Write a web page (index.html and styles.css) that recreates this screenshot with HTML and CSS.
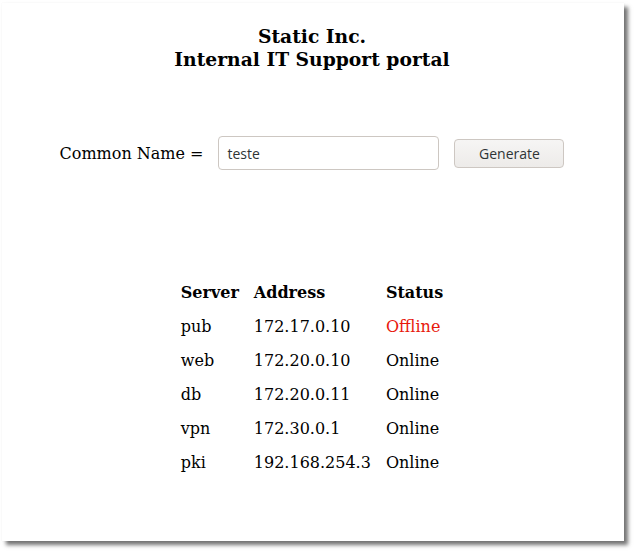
FILE: index.html
```html
<!DOCTYPE html>
<html>
<head>
<meta charset="utf-8">
<link rel="stylesheet" href="styles.css">
</head>
<body>
<div class="window">
  <h1 class="title">Static Inc.<br>Internal IT Support portal</h1>
  <form class="form">
    <label class="label" for="cn">Common Name =</label>
    <input class="input" id="cn" type="text" value="teste">
    <button class="button" type="button">Generate</button>
  </form>
  <table class="servers">
    <thead>
      <tr><th>Server</th><th>Address</th><th>Status</th></tr>
    </thead>
    <tbody>
      <tr><td>pub</td><td>172.17.0.10</td><td class="offline">Offline</td></tr>
      <tr><td>web</td><td>172.20.0.10</td><td>Online</td></tr>
      <tr><td>db</td><td>172.20.0.11</td><td>Online</td></tr>
      <tr><td>vpn</td><td>172.30.0.1</td><td>Online</td></tr>
      <tr><td>pki</td><td>192.168.254.3</td><td>Online</td></tr>
    </tbody>
  </table>
</div>
</body>
</html>
```
FILE: styles.css
```css
html, body {
  margin: 0;
  padding: 0;
  background: #ffffff;
}
body {
  font-family: "DejaVu Serif", serif;
  font-size: 16px;
  color: #000;
  padding: 3px 0 11px 2px;
}
.window {
  box-sizing: border-box;
  width: 622px;
  height: 538px;
  padding-right: 2px;
  background: #fff;
  box-shadow: 4px 4px 4px rgba(0, 0, 0, 0.55), 0 0 1px rgba(0, 0, 0, 0.08);
  overflow: hidden;
  display: flex;
  flex-direction: column;
  align-items: center;
}
.title {
  margin: 22px 0 0;
  font-size: 18.72px;
  line-height: 23px;
  font-weight: bold;
  text-align: center;
}
.form {
  margin-top: 65px;
  display: flex;
  align-items: center;
}
.label {
  margin-right: 15px;
}
.input {
  box-sizing: border-box;
  width: 221px;
  height: 34px;
  border: 1px solid #cdc7c2;
  border-radius: 4px;
  padding: 0 8px;
  font-family: "Open Sans", sans-serif;
  font-size: 14px;
  color: #2e3436;
  margin-right: 15px;
}
.button {
  box-sizing: border-box;
  width: 110px;
  height: 29px;
  border: 1px solid #cdc7c2;
  border-radius: 4px;
  background: linear-gradient(#f6f5f4, #edebe9);
  font-family: "Open Sans", sans-serif;
  font-size: 14px;
  color: #2e3436;
  padding: 0;
}
.servers {
  margin-top: 104px;
  border-spacing: 2px;
}
.servers th, .servers td {
  padding: 6.5px;
  text-align: left;
  font-size: 16px;
}
.offline {
  color: #e8180c;
}
```
